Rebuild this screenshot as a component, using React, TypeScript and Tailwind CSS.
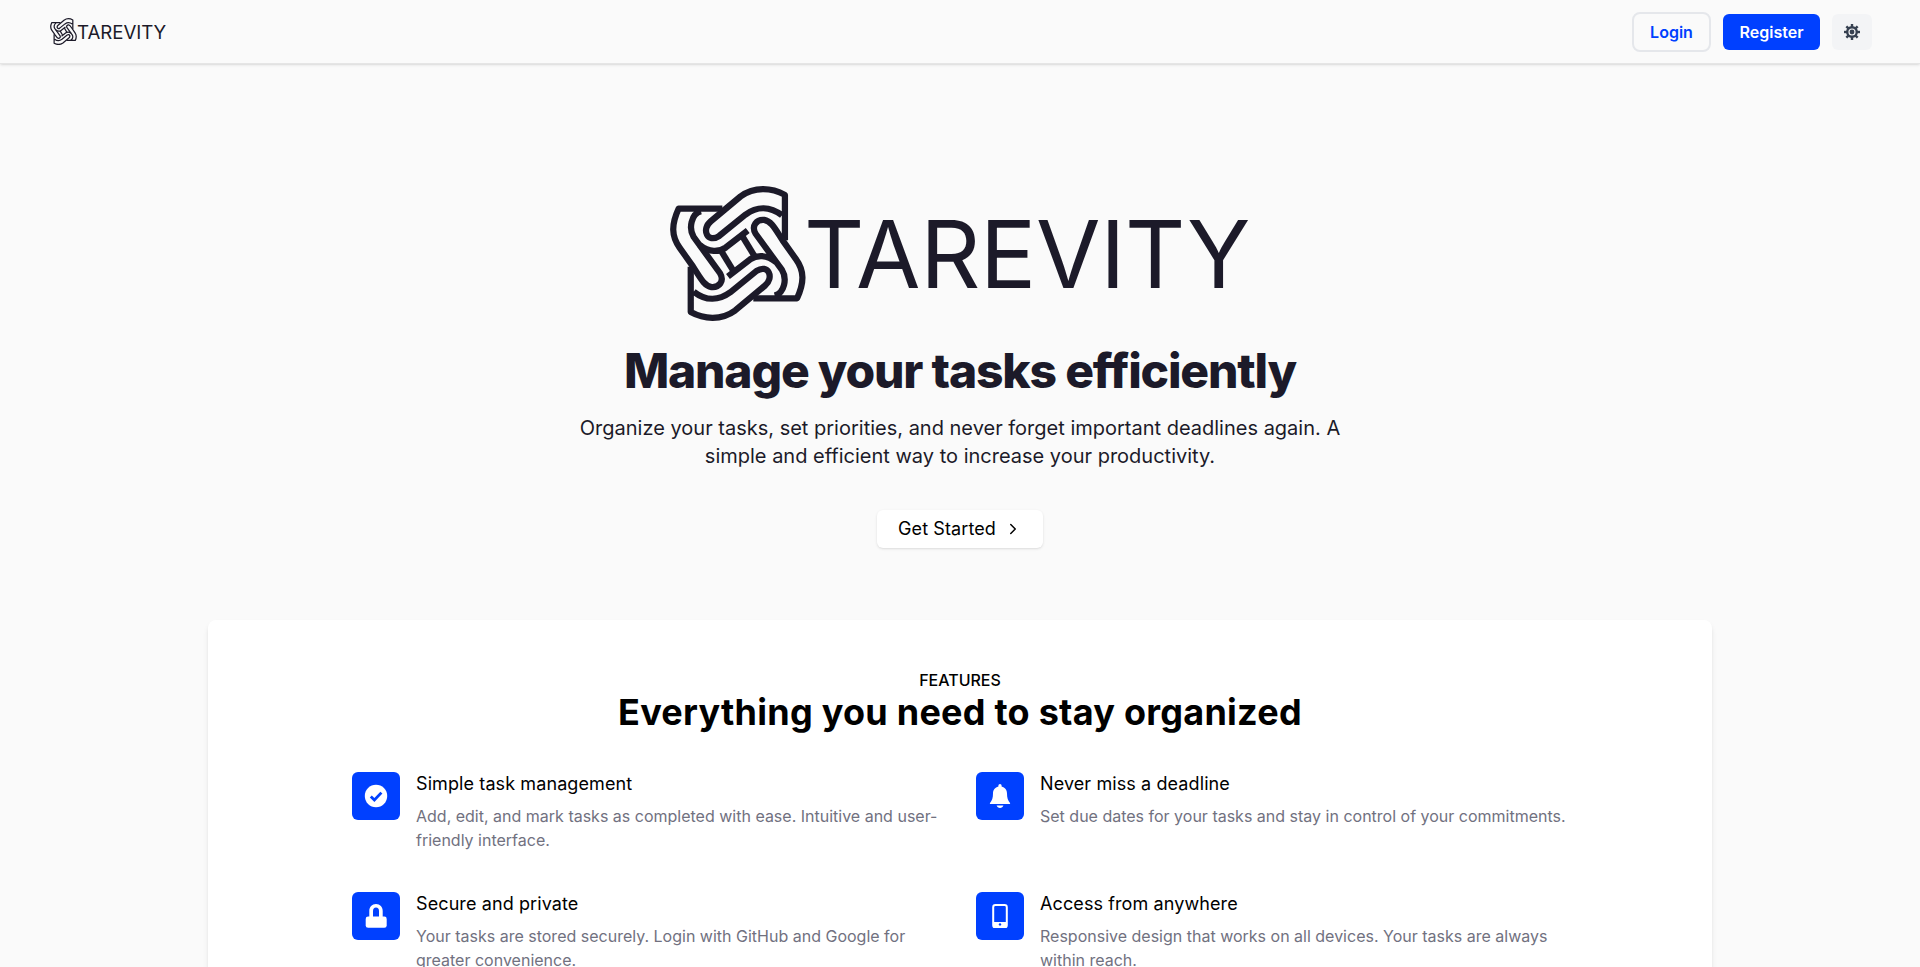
import React from "react";
import { ChevronRight } from "lucide-react";

const strands = [
  "M405 208 L405 70 C365 48 312 44 270 75 L180 150 C150 175 170 218 205 195 L285 130 C320 104 360 104 396 132",
  "M215 112 L82 112 C60 160 60 195 85 230 L126 288 C150 325 160 346 182 350 C205 352 222 332 208 308 L128 198 C112 172 120 128 150 120",
  "M146 222 C175 246 205 244 225 230 L292 178",
  "M210 238 L248 300",
];

function Mark({ className }: { className: string }) {
  return (
    <svg viewBox="56 40 413 413" className={className} fill="none" stroke="#1c1a29" strokeWidth="19" strokeLinejoin="round">
      {strands.map((d) => (
        <path key={d} d={d} />
      ))}
      <g transform="rotate(180 262 248)">
        {strands.map((d) => (
          <path key={d} d={d} />
        ))}
      </g>
    </svg>
  );
}

const teeth = [0, 45, 90, 135, 180, 225, 270, 315];

const features = [
  {
    title: "Simple task management",
    text: "Add, edit, and mark tasks as completed with ease. Intuitive and user-friendly interface.",
    icon: (
      <svg viewBox="0 0 24 24" className="w-[24px] h-[24px]">
        <circle cx="12" cy="12" r="11.2" fill="#fff" />
        <path d="M6.8 12.4l3.6 3.6 7-7.4" fill="none" stroke="#0040ff" strokeWidth="2.8" />
      </svg>
    ),
  },
  {
    title: "Never miss a deadline",
    text: "Set due dates for your tasks and stay in control of your commitments.",
    icon: (
      <svg viewBox="0 0 24 24" className="w-[24px] h-[24px]" fill="#fff">
        <path d="M12 0a1.6 1.6 0 0 0-1.6 1.6v.9C7 3.3 5 6 5 9.5c0 4.5-.9 6.8-3 9.4-.4.6 0 1.1.6 1.1h18.8c.6 0 1-.5.6-1.1-2.1-2.6-3-4.9-3-9.4 0-3.5-2-6.2-5.4-7v-.9A1.6 1.6 0 0 0 12 0z" />
        <path d="M8.6 21.5h6.8c-.5 1.5-1.8 2.5-3.4 2.5s-2.9-1-3.4-2.5z" />
      </svg>
    ),
  },
  {
    title: "Secure and private",
    text: "Your tasks are stored securely. Login with GitHub and Google for greater convenience.",
    icon: (
      <svg viewBox="0 0 24 24" className="w-[24px] h-[24px]" fill="#fff">
        <path d="M12 0C8 0 5.3 3 5.3 7v6H9V7c0-2 1-3.5 3-3.5S15 5 15 7v6h3.7V7C18.7 3 16 0 12 0z" />
        <rect x="1.7" y="12.6" width="21" height="11.2" rx="2.4" />
      </svg>
    ),
  },
  {
    title: "Access from anywhere",
    text: "Responsive design that works on all devices. Your tasks are always within reach.",
    icon: (
      <svg viewBox="0 0 24 24" className="w-[24px] h-[24px]" fill="none">
        <rect x="5.2" y="1" width="13.6" height="22.4" rx="2.2" stroke="#fff" strokeWidth="2" />
        <rect x="5.2" y="18" width="13.6" height="5.4" fill="#fff" />
        <circle cx="12" cy="20.4" r="1.2" fill="#0040ff" />
      </svg>
    ),
  },
];

export default function App() {
  return (
    <div className="min-h-screen bg-[#fafafa] font-['Inter',sans-serif]">
      <header className="h-[64px] flex items-center justify-between pl-[50px] pr-[48px] bg-[#fafafa] border-b border-[#e5e5e5] shadow-sm">
        <div className="flex items-center">
          <Mark className="w-[27px] h-[27px]" />
          <span className="text-[18.7px] font-normal leading-none text-[#1c1a29] pt-[3px] tracking-[-0.06px]">TAREVITY</span>
        </div>
        <div className="flex items-center">
          <button className="h-[40px] w-[79px] rounded-lg border-2 border-[#e5e7eb] text-[#0040ff] font-semibold text-base">Login</button>
          <button className="h-[36px] w-[97px] ml-[12px] rounded-md bg-[#0040ff] text-white font-semibold text-base">Register</button>
          <button className="h-[36px] w-[40px] ml-[12px] rounded-md bg-[#f3f4f6] flex items-center justify-center">
            <svg viewBox="0 0 24 24" className="w-[16px] h-[16px]" fill="#374151">
              <path
                fillRule="evenodd"
                d="M12 3a9 9 0 1 0 0 18 9 9 0 0 0 0-18zm0 3.6a5.4 5.4 0 1 1 0 10.8 5.4 5.4 0 0 1 0-10.8z"
              />
              <circle cx="12" cy="12" r="3.6" />
              {teeth.map((a) => (
                <rect key={a} x="10.2" y="0" width="3.6" height="5" transform={`rotate(${a} 12 12)`} />
              ))}
            </svg>
          </button>
        </div>
      </header>

      <section className="flex flex-col items-center pt-[121px]">
        <div className="flex items-center h-[136px]">
          <Mark className="w-[136px] h-[136px]" />
          <span className="text-[93.5px] font-normal leading-none text-[#1c1a29] ml-[-2px] pt-[4px] tracking-[-0.3px]">TAREVITY</span>
        </div>
        <h1 className="mt-[20px] text-5xl font-extrabold tracking-tight text-[#1c1a29] leading-[60px]">Manage your tasks efficiently</h1>
        <p className="mt-[13px] w-[768px] text-center text-xl leading-[28px] text-[#1c1a29]">
          Organize your tasks, set priorities, and never forget important deadlines again. A simple and efficient way to increase your productivity.
        </p>
        <button className="mt-[40px] h-[38px] w-[166px] bg-white rounded-md shadow flex items-center justify-center gap-[8px] font-normal text-black text-lg tracking-[0.1px]">
          Get Started
          <ChevronRight size={18} />
        </button>
      </section>

      <section className="mt-[72px] mx-[208px] bg-white rounded-lg shadow-md pt-[48px] pb-[48px] px-[144px]">
        <div className="text-center text-base font-medium text-black leading-[24px]">FEATURES</div>
        <h2 className="text-center text-4xl font-bold tracking-[0.25px] text-black leading-[40px]">Everything you need to stay organized</h2>
        <div className="mt-[40px] grid grid-cols-2 gap-x-[32px] gap-y-[40px]">
          {features.map((f) => (
            <div key={f.title} className="flex gap-[16px]">
              <div className="w-[48px] h-[48px] shrink-0 rounded-md bg-[#0040ff] flex items-center justify-center">{f.icon}</div>
              <div>
                <div className="text-lg font-normal tracking-[0.1px] text-black leading-[24px]">{f.title}</div>
                <div className="mt-[8px] text-base leading-[24px] text-[#71717f]">{f.text}</div>
              </div>
            </div>
          ))}
        </div>
      </section>
    </div>
  );
}
